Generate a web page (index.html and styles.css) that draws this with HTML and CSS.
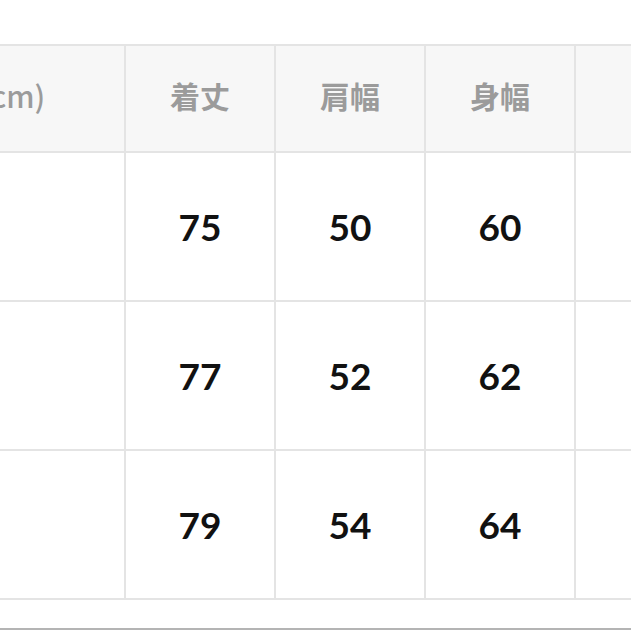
FILE: index.html
```html
<!DOCTYPE html>
<html lang="ja">
<head>
<meta charset="utf-8">
<link rel="stylesheet" href="styles.css">
</head>
<body>
<div class="page">
  <div class="table">
    <div class="cell head first">サイズ<span class="unit">(cm)</span></div>
    <div class="cell head">着丈</div>
    <div class="cell head">肩幅</div>
    <div class="cell head">身幅</div>
    <div class="cell head"></div>

    <div class="cell first"></div>
    <div class="cell num">75</div>
    <div class="cell num">50</div>
    <div class="cell num">60</div>
    <div class="cell num"></div>

    <div class="cell first"></div>
    <div class="cell num">77</div>
    <div class="cell num">52</div>
    <div class="cell num">62</div>
    <div class="cell num"></div>

    <div class="cell first"></div>
    <div class="cell num">79</div>
    <div class="cell num">54</div>
    <div class="cell num">64</div>
    <div class="cell num"></div>
  </div>
  <div class="footer-line"></div>
</div>
</body>
</html>
```
FILE: styles.css
```css
html, body {
  margin: 0;
  padding: 0;
  background: #ffffff;
  overflow: hidden;
}

.page {
  width: 631px;
  height: 631px;
  overflow: hidden;
  padding-top: 44px;
  box-sizing: border-box;
  display: flex;
  flex-direction: column;
}

.table {
  display: grid;
  grid-template-columns: 312px 148px 148px 148px 148px;
  grid-template-rows: 105px 147px 147px 147px;
  gap: 2px;
  padding: 2px 0;
  margin-left: -188px;
  width: max-content;
  background: #e4e4e4;
}

.cell {
  background: #ffffff;
  display: flex;
  align-items: center;
  justify-content: center;
  color: #111111;
}

.cell.head {
  background: #f7f7f7;
  color: #9b9b9b;
  font-family: "Noto Sans CJK JP", "Noto Sans", sans-serif;
  font-weight: 700;
  font-size: 30px;
  padding-bottom: 7px;
  box-sizing: border-box;
}

.unit {
  font-weight: 500;
}

.cell.num {
  font-family: Lato, "Liberation Sans", sans-serif;
  font-weight: 700;
  font-size: 37px;
  color: #111111;
}

.footer-line {
  margin-top: 28px;
  height: 2px;
  background: #b4b4b4;
  width: 631px;
}
```
